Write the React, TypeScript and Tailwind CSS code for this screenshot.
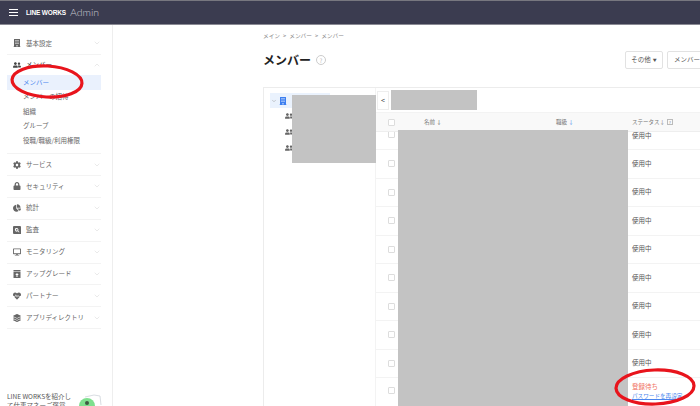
import React from 'react';
import { FaBuilding, FaUserFriends, FaCog, FaLock, FaChartPie, FaDesktop, FaHeartbeat, FaLayerGroup } from 'react-icons/fa';
import { ChevronDown, ChevronUp } from 'lucide-react';

const AuditIcon = () => (
  <svg viewBox="0 0 16 16" className="w-[8px] h-[8px]" fill="currentColor">
    <path fillRule="evenodd" d="M2 0h12a2 2 0 0 1 2 2v14H2a2 2 0 0 1-2-2V2a2 2 0 0 1 2-2zm5.500 4a3.500 3.500 0 1 0 1.900 6.400L12 13l1-1-2.600-2.600A3.500 3.500 0 0 0 7.500 4zm0 1.800a1.700 1.700 0 1 1 0 3.400 1.700 1.700 0 0 1 0-3.400z" />
  </svg>
);

const UpgradeIcon = () => (
  <svg viewBox="0 0 16 16" className="w-[8px] h-[8px]" fill="currentColor">
    <path fillRule="evenodd" d="M1 0h14v3H1zM1 4h14v12H1zm7 2L4.500 10H7v4h2v-4h2.500z" />
  </svg>
);

const MENU_TOP = [{ label: '基本設定', icon: <FaBuilding /> }];

const MENU_BOTTOM = [
  { label: 'サービス', icon: <FaCog /> },
  { label: 'セキュリティ', icon: <FaLock /> },
  { label: '統計', icon: <FaChartPie /> },
  { label: '監査', icon: <AuditIcon /> },
  { label: 'モニタリング', icon: <FaDesktop /> },
  { label: 'アップグレード', icon: <UpgradeIcon /> },
  { label: 'パートナー', icon: <FaHeartbeat /> },
  { label: 'アプリディレクトリ', icon: <FaLayerGroup /> },
];

const SUB_MENU = ['メンバーの招待', '組織', 'グループ', '役職/職級/利用権限'];

const ROWS = Array.from({ length: 8 });

const MenuRow = ({ label, icon }: { label: string; icon: React.ReactNode }) => (
  <div className="h-[21.9px] flex items-center border-b border-[#f3f3f3] pl-[3px] text-[#666]">
    <span className="w-[13px] flex justify-center text-[8px] text-[#666]">{icon}</span>
    <span className="ml-[3px] flex-1 text-[6.5px]">{label}</span>
    <ChevronDown className="w-[8px] h-[8px] text-[#d4d4d4]" strokeWidth={1.5} />
  </div>
);

const Checkbox = () => (
  <span className="block w-[7px] h-[7px] rounded-[1px] border border-[#dddddd] bg-white" />
);

export default function App() {
  return (
    <div
      className="relative w-[700px] h-[406px] overflow-hidden bg-white text-[#444]"
      style={{ fontFamily: '"Noto Sans CJK JP", "Noto Sans", sans-serif' }}
    >
      {/* Header */}
      <header className="h-[25px] bg-[#3b3c50] border-t border-b border-t-[#77777f] border-b-[#8a8a94] flex items-center pl-[9px]">
        <span className="flex flex-col gap-[2px] w-[9px]">
          <span className="h-px bg-white" />
          <span className="h-px bg-white" />
          <span className="h-px bg-white" />
        </span>
        <span className="ml-[8px] text-[6.5px] font-bold text-white tracking-tight" style={{ fontFamily: '"Liberation Sans", sans-serif' }}>LINE WORKS</span>
        <span className="ml-[4px] text-[10.5px] font-light text-[#c9c9d2]" style={{ fontFamily: 'Lato, sans-serif' }}>Admin</span>
      </header>

      <div className="flex h-[381px]">
        {/* Sidebar */}
        <aside className="relative w-[113px] shrink-0 border-r border-[#eeeeee] pl-[7px] pr-[11px] pt-[8px]">
          {MENU_TOP.map((m) => <MenuRow key={m.label} {...m} />)}
          <div className="border-b border-[#f3f3f3] h-[99.2px]">
            <div className="h-[20px] flex items-center pl-[3px]">
              <span className="w-[13px] flex justify-center text-[8px] text-[#444]"><FaUserFriends /></span>
              <span className="ml-[3px] flex-1 text-[6.5px] text-[#333]">メンバー</span>
              <ChevronUp className="w-[8px] h-[8px] text-[#d4d4d4]" strokeWidth={1.5} />
            </div>
            <div className="h-[15px] bg-[#eaf1fd] text-[#4a86ee] text-[6.5px] pl-[16px] flex items-center">メンバー</div>
            {SUB_MENU.map((s) => (
              <div key={s} className="h-[14.5px] text-[#666] text-[6.5px] pl-[16px] flex items-center">{s}</div>
            ))}
          </div>
          {MENU_BOTTOM.map((m) => <MenuRow key={m.label} {...m} />)}
          <div className="absolute left-[7px] top-[367px] text-[6.5px] leading-[9px] text-[#555] whitespace-nowrap">
            <div>LINE WORKSを紹介し</div>
            <div>て仕事マネーご褒賞</div>
          </div>
          <svg className="absolute left-[76px] top-[367px]" width="28" height="14" viewBox="0 0 28 14">
            <path d="M9 5l9-2 6 1 1 9" fill="#fff" stroke="#c9ced6" strokeWidth="0.7" />
            <circle cx="11" cy="14" r="8" fill="#7ee08e" />
            <circle cx="11" cy="11" r="2" fill="#222" opacity="0.7" />
          </svg>
        </aside>

        {/* Main */}
        <main className="flex-1 min-w-0 pl-[150px]">
          <div className="pt-[7px] text-[5.7px] text-[#888] flex gap-[3px] h-[16px] items-center">
            <span>メイン</span><span>&gt;</span><span>メンバー</span><span>&gt;</span><span>メンバー</span>
          </div>
          <div className="mt-[8px] h-[22px] flex items-center w-[500px]">
            <h1 className="text-[12px] font-bold text-[#222]">メンバー</h1>
            <span className="ml-[5px] w-[10px] h-[10px] rounded-full border border-[#ccc] text-[#bbb] text-[6px] flex items-center justify-center">?</span>
            <div className="ml-[299px] flex gap-[4px] shrink-0">
              <span className="h-[18px] w-[38px] border border-[#e2e2e2] rounded-[2px] text-[6.5px] text-[#555] flex items-center justify-center gap-[2px]">その他<span className="text-[4px]">▼</span></span>
              <span className="h-[18px] w-[60px] border border-[#e2e2e2] rounded-[2px] text-[6.5px] text-[#555] flex items-center pl-[6px]">メンバー</span>
            </div>
          </div>

          {/* Panels */}
          <div className="mt-[16px] w-[500px] h-[400px] border-t border-l border-[#ececec] flex">
            <div className="relative w-[112px] shrink-0 border-r border-[#f3f3f3] pt-[5px] pl-[6px]">
              <div className="h-[15px] w-[60px] bg-[#eaf2fd] flex items-center pl-[1px]">
                <ChevronDown className="w-[6px] h-[6px] text-[#999]" strokeWidth={2} />
                <FaBuilding className="ml-[2px] text-[#3d7ff0] text-[8px]" />
              </div>
              {[0, 1, 2].map((i) => (
                <div key={i} className="h-[16px] flex items-center pl-[15px] text-[#666] text-[8px]"><FaUserFriends /></div>
              ))}
              <div className="absolute left-[28px] top-[7px] w-[84px] h-[68px] bg-[#c3c3c3]" />
            </div>
            <div className="flex-1 min-w-0">
              <div className="relative h-[25px] flex items-center border-b border-[#f3f3f3]">
                <span className="ml-px w-[12px] h-[19px] border border-[#eee] bg-white flex items-center justify-center text-[7px] text-[#444]">&lt;</span>
                <span className="ml-[2px] w-[86px] h-[20px] bg-[#c3c3c3]" />
              </div>
              <div className="h-[19px] bg-[#f9f9f9] border-b border-[#eee] flex items-center text-[5.5px] text-[#777]">
                <span className="ml-[12px]"><Checkbox /></span>
                <span className="ml-[29px] w-[132px]">名前 <span className="text-[#555]">↓</span></span>
                <span className="w-[76px]">職級 <span className="text-[#4a86ee]">↓</span></span>
                <span className="flex items-center gap-[2px] whitespace-nowrap">ステータス↓<span className="w-[6px] h-[6px] border border-[#bbb] text-[4px] flex items-center justify-center">?</span></span>
              </div>
              <div className="relative">
                <div className="absolute left-[22px] top-[-2px] w-[230px] h-[300px] bg-[#c3c3c3]" />
                <div className="h-[18px] border-b border-[#f3f3f3] overflow-hidden flex items-start">
                  <span className="ml-[12px] -mt-[1px]"><Checkbox /></span>
                  <span className="ml-[237px] text-[6.5px] leading-[6px] text-[#555]">使用中</span>
                </div>
                {ROWS.map((_, i) => (
                  <div key={i} className="h-[28.500px] border-b border-[#f3f3f3] flex items-center">
                    <span className="ml-[12px]"><Checkbox /></span>
                    <span className="ml-[237px] text-[6.5px] text-[#555]">使用中</span>
                  </div>
                ))}
                <div className="h-[25px] flex items-center">
                  <span className="ml-[12px]"><Checkbox /></span>
                  <div className="ml-[237px] text-[6.5px] leading-[10px]">
                    <div className="text-[#f0705f]">登録待ち</div>
                    <div className="text-[#4a86ee] underline text-[5.6px] whitespace-nowrap">パスワードを再設定</div>
                  </div>
                </div>
              </div>
            </div>
          </div>
        </main>
      </div>

      {/* Red annotation ellipses drawn over the screenshot */}
      <svg className="absolute left-0 top-0 pointer-events-none" width="700" height="406">
        <ellipse cx="47" cy="81.500" rx="35" ry="15.500" fill="none" stroke="#e8141c" strokeWidth="3.200" transform="rotate(3 47 81.500)" />
        <ellipse cx="655" cy="387" rx="39" ry="17" fill="none" stroke="#e8141c" strokeWidth="3.200" transform="rotate(-2 655 387)" />
      </svg>
    </div>
  );
}
